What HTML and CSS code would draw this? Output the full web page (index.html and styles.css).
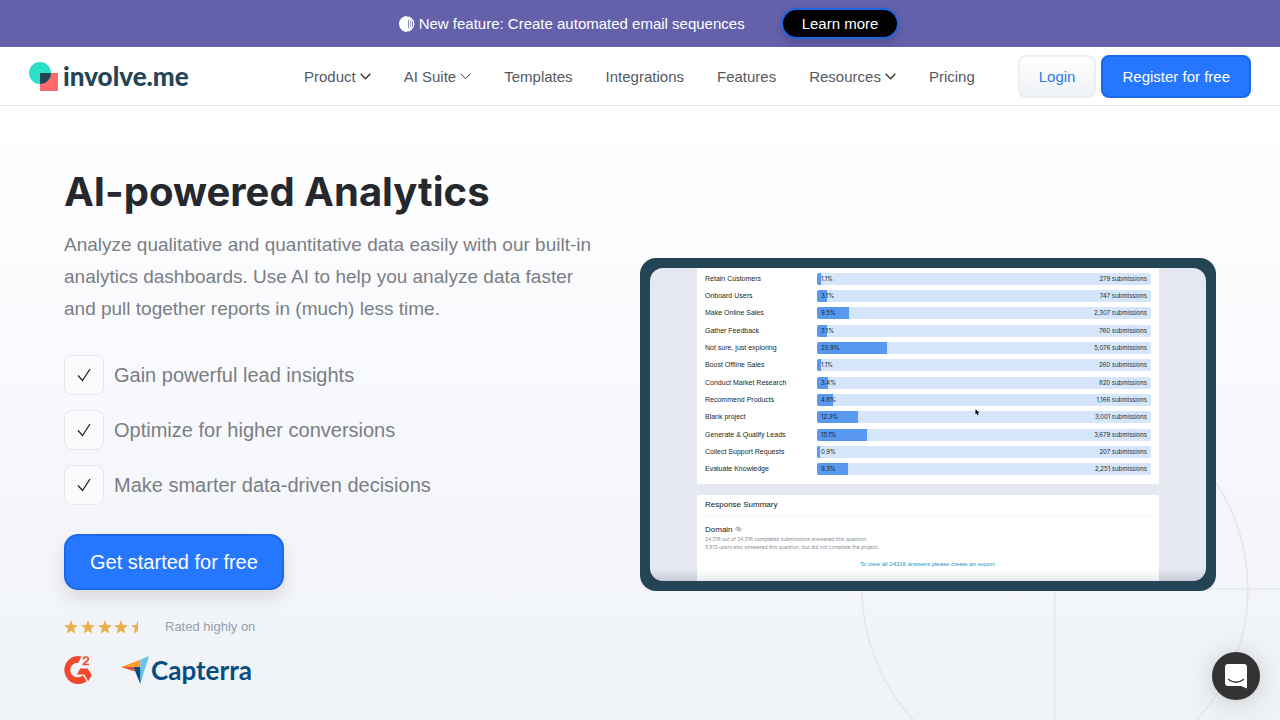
FILE: index.html
```html
<!DOCTYPE html>
<html lang="en">
<head>
<meta charset="utf-8">
<meta name="viewport" content="width=device-width, initial-scale=1">
<title>AI-powered Analytics | involve.me</title>
<link rel="stylesheet" href="styles.css">
</head>
<body>
<aside class="banner">
  <p class="banner-text">
    <svg class="banner-icon" viewBox="0 0 16 16" aria-hidden="true">
      <path d="M8 0A8 8 0 0 0 8 16Z" fill="#fff"/>
      <g fill="none" stroke="#fff" stroke-width="1.3"><path d="M8.600.7V15.300"/><path d="M9 .7Q12.600 8 9 15.300"/><path d="M10 1Q15.400 8 10 15"/><path d="M11.500 1.600Q18.200 8 11.500 14.400"/></g>
    </svg>
    New feature: Create automated email sequences
  </p>
  <a class="banner-link" href="#">Learn more</a>
</aside>

<header class="header">
  <a class="logo" href="#">
    <svg class="logo-mark" viewBox="0 0 29 29" aria-hidden="true">
      <path d="M11 11H29V29H11Z" fill="#ff6b6b"/>
      <circle cx="11" cy="11" r="11" fill="#2be0c8"/>
      <path d="M11 11H22A11 11 0 0 1 11 22Z" fill="#234555"/>
    </svg>
    <span class="logo-name">involve.me</span>
  </a>
  <nav class="nav" aria-label="Main">
    <button class="nav-item" type="button">Product <svg class="chevron" viewBox="0 0 11 7" aria-hidden="true"><path d="M.7.8 5.500 5.700 10.300.8"/></svg></button>
    <button class="nav-item" type="button">AI Suite <svg class="chevron chevron-light" viewBox="0 0 11 7" aria-hidden="true"><path d="M.7.8 5.500 5.700 10.300.8"/></svg></button>
    <a class="nav-item" href="#">Templates</a>
    <a class="nav-item" href="#">Integrations</a>
    <a class="nav-item" href="#">Features</a>
    <button class="nav-item" type="button">Resources <svg class="chevron" viewBox="0 0 11 7" aria-hidden="true"><path d="M.7.8 5.500 5.700 10.300.8"/></svg></button>
    <a class="nav-item" href="#">Pricing</a>
  </nav>
  <div class="account">
    <a class="btn btn-light" href="#">Login</a>
    <a class="btn btn-primary" href="#">Register for free</a>
  </div>
</header>

<main class="hero">
  <svg class="hero-lines" viewBox="0 0 420 420" aria-hidden="true">
    <circle cx="195" cy="195" r="193"/><path d="M195 195V420M195 195H420"/>
  </svg>
  <section class="intro">
    <h1 class="title">AI-powered Analytics</h1>
    <p class="lead">Analyze qualitative and quantitative data easily with our built-in analytics dashboards. Use AI to help you analyze data faster <br>and pull together reports in (much) less time.</p>
    <ul class="benefits">
      <li class="benefit"><span class="tick"><svg viewBox="0 0 14 14" aria-hidden="true"><path d="M1 7.500 5.500 12.500 13 1"/></svg></span>Gain powerful lead insights</li>
      <li class="benefit"><span class="tick"><svg viewBox="0 0 14 14" aria-hidden="true"><path d="M1 7.500 5.500 12.500 13 1"/></svg></span>Optimize for higher conversions</li>
      <li class="benefit"><span class="tick"><svg viewBox="0 0 14 14" aria-hidden="true"><path d="M1 7.500 5.500 12.500 13 1"/></svg></span>Make smarter data-driven decisions</li>
    </ul>
    <a class="btn btn-primary btn-large" href="#">Get started for free</a>
    <div class="rating">
      <svg class="stars" viewBox="0 0 76 14" role="img" aria-label="4.5 out of 5 stars">
        <defs><path id="star" d="M7 0 8.900 4.900 14 5.200 10 8.500 11.400 13.700 7 10.800 2.600 13.700 4 8.500 0 5.200 5.100 4.900Z"/></defs>
        <use href="#star"/><use href="#star" x="17"/><use href="#star" x="34"/><use href="#star" x="50"/>
        <path d="M74 0V10.800L69.600 13.700 71 8.500 67 5.200 72.100 4.900Z"/>
      </svg>
      <span>Rated highly on</span>
    </div>
    <div class="partners">
      <svg class="g2" viewBox="0 0 28 30" role="img" aria-label="G2">
        <path d="M17.500 1.400A14 14 0 1 0 22.800 26.200L18.800 20.200A7.300 7.300 0 1 1 14.500 7.800Z" fill="#ef492d"/>
        <path d="M16.200 13.500H23.600L27.800 20 24.200 26.300 20.300 19.600H13Z" fill="#ef492d"/>
        <path d="M19.200 4.300Q19.600 2 21.900 2 24.300 2 24.300 4.100 24.300 5.500 22.300 6.700 19.900 7.900 19.500 9.500H25" fill="none" stroke="#ef492d" stroke-width="1.700"/>
      </svg>
      <span class="capterra">
        <svg class="capterra-mark" viewBox="0 0 29 29" aria-hidden="true">
          <path d="M0 11 19.300 3.800V11Z" fill="#ff9d28"/>
          <path d="M19.300 3.800 28 0 19.300 28Z" fill="#68c5ed"/>
          <path d="M12.500 11H19.300V28Z" fill="#044d80"/>
          <path d="M0 11H12.500L14.300 15.600Z" fill="#e54747"/>
        </svg>
        Capterra
      </span>
    </div>
  </section>

  <section class="preview" aria-label="Analytics preview">
    <div class="screen">
      <div class="card">
        <table class="stats">
          <tbody>
            <tr><th>Retain Customers</th><td><div class="bar"><i style="width:1.1%"></i><span>1.1%</span><b>279 submissions</b></div></td></tr>
            <tr><th>Onboard Users</th><td><div class="bar"><i style="width:3.1%"></i><span>3.1%</span><b>747 submissions</b></div></td></tr>
            <tr><th>Make Online Sales</th><td><div class="bar"><i style="width:9.5%"></i><span>9.5%</span><b>2,307 submissions</b></div></td></tr>
            <tr><th>Gather Feedback</th><td><div class="bar"><i style="width:3.1%"></i><span>3.1%</span><b>760 submissions</b></div></td></tr>
            <tr><th>Not sure, just exploring</th><td><div class="bar"><i style="width:20.9%"></i><span>20.9%</span><b>5,076 submissions</b></div></td></tr>
            <tr><th>Boost Offline Sales</th><td><div class="bar"><i style="width:1.1%"></i><span>1.1%</span><b>260 submissions</b></div></td></tr>
            <tr><th>Conduct Market Research</th><td><div class="bar"><i style="width:3.4%"></i><span>3.4%</span><b>820 submissions</b></div></td></tr>
            <tr><th>Recommend Products</th><td><div class="bar"><i style="width:4.8%"></i><span>4.8%</span><b>1,166 submissions</b></div></td></tr>
            <tr><th>Blank project</th><td><div class="bar"><i style="width:12.3%"></i><span>12.3%</span><b>3,001 submissions</b></div></td></tr>
            <tr><th>Generate &amp; Qualify Leads</th><td><div class="bar"><i style="width:15.1%"></i><span>15.1%</span><b>3,679 submissions</b></div></td></tr>
            <tr><th>Collect Support Requests</th><td><div class="bar"><i style="width:0.9%"></i><span>0.9%</span><b>207 submissions</b></div></td></tr>
            <tr><th>Evaluate Knowledge</th><td><div class="bar"><i style="width:9.3%"></i><span>9.3%</span><b>2,251 submissions</b></div></td></tr>
          </tbody>
        </table>
      </div>
      <div class="card summary">
        <h2 class="summary-title">Response Summary</h2>
        <h3 class="summary-field">Domain <svg class="eye" viewBox="0 0 7 6" aria-hidden="true"><path d="M.4 3Q3.500-.8 6.600 3 3.500 6.800.4 3ZM1 .5 6 5.500"/><circle cx="3.500" cy="3" r="1"/></svg></h3>
        <p class="summary-note">24,316 out of 24,316 completed submissions answered this question.</p>
        <p class="summary-note">3,513 users also answered this question, but did not complete the project.</p>
        <a class="summary-link" href="#">To view all 24316 answers please create an export.</a>
      </div>
      <svg class="cursor" viewBox="0 0 5 7" aria-hidden="true"><path d="M.5 0V5.200L1.700 4.200 2.500 6.300 3.600 5.800 2.800 3.900H4.300Z"/></svg>
    </div>
  </section>
</main>

<button class="chat" type="button" aria-label="Open chat">
  <svg viewBox="0 0 22 25" aria-hidden="true">
    <path d="M3 0H19Q22 0 22 3V24.500L16 22H3Q0 22 0 19V3Q0 0 3 0Z" fill="#fff"/>
    <path d="M3.500 15.500Q11 21 18.500 15.500" fill="none" stroke="#333" stroke-width="1.300" stroke-linecap="round"/>
  </svg>
</button>
</body>
</html>
```
FILE: styles.css
```css
* { box-sizing: border-box; }

body {
  margin: 0;
  min-height: 100vh;
  display: flex;
  flex-direction: column;
  font-family: "Liberation Sans", Arial, sans-serif;
  font-size: 15px;
  color: #54595f;
}

a { color: inherit; text-decoration: none; }
button { font: inherit; color: inherit; border: 0; background: none; padding: 0; cursor: pointer; }
h1, h2, h3, p, ul { margin: 0; padding: 0; }
ul { list-style: none; }

.banner {
  display: flex;
  justify-content: center;
  align-items: center;
  gap: 36px;
  min-height: 47px;
  padding: 8px 16px 8px 34px;
  background: #6461aa;
  color: #fff;
}
.banner-text { display: flex; align-items: center; gap: 4px; }
.banner-icon { width: 16px; height: 16px; }
.banner-link {
  padding: 5px 19px;
  border: 2px solid #1c66e0;
  border-radius: 16px;
  line-height: 17px;
  background: #000;
  box-shadow: 0 4px 8px rgba(40, 40, 80, .25);
}

.header {
  display: flex;
  align-items: center;
  min-height: 59px;
  padding: 0 29px;
  background: #fff;
  border-bottom: 1px solid #e4e8ec;
}
.logo { display: flex; align-items: center; gap: 5px; color: #234555; }
.logo-mark { width: 29px; height: 29px; }
.logo-name { font: 900 26px/29px Lato, sans-serif; }
.nav { display: flex; gap: 33px; margin-left: auto; margin-right: 43px; }
.nav-item { display: flex; align-items: center; gap: 4px; line-height: 21px; }
.chevron { width: 11px; height: 7px; fill: none; stroke: #333; stroke-width: 1.4; }
.chevron-light { stroke-width: 1; }
.account { display: flex; gap: 5px; }

.btn {
  display: inline-block;
  padding: 11px 19px;
  border: 2px solid;
  border-radius: 8px;
  line-height: 17px;
}
.btn-light { border-color: #eceef0; background: linear-gradient(#fff, #eef1f5); color: #2b7be4; }
.btn-primary { border-color: #1a69ea; background: #2577ff; color: #fff; }
.btn-large {
  padding: 14px 24px;
  border-radius: 14px;
  font-size: 20px;
  line-height: 24px;
  box-shadow: 0 8px 16px rgba(60, 60, 70, .14);
}

.hero {
  position: relative;
  overflow: hidden;
  flex: 1;
  display: grid;
  grid-template-columns: 1fr 1fr;
  align-items: center;
  padding: 58px 64px 35px;
  background: linear-gradient(#fff, #f9fafd 38%, #f3f5f9 76%, #eff3f6);
}
.hero-lines {
  position: absolute;
  right: 0;
  bottom: -94px;
  width: 420px;
  height: 420px;
  fill: none;
  stroke: #e4e6ea;
  stroke-width: 1.5;
}
.intro { position: relative; padding-right: 36px; }
.title { font: 700 40px/56px Inter, sans-serif; color: #25282d; }
.lead { margin-top: 9px; font-size: 19px; line-height: 32px; color: #7b7e83; }
.benefits { display: grid; gap: 15px; margin: 30px 0 29px; }
.benefit { display: flex; align-items: center; gap: 10px; font-size: 20px; color: #7b7e83; }
.tick {
  display: grid;
  place-items: center;
  width: 40px;
  height: 40px;
  border: 1px solid #e3e8ed;
  border-radius: 8px;
  background: #fafbfd;
}
.tick svg { width: 14px; height: 14px; fill: none; stroke: #222; stroke-width: 1.3; }
.rating { display: flex; align-items: center; gap: 25px; margin-top: 29px; font-size: 13px; line-height: 16px; color: #94a0b3; }
.stars { width: 76px; height: 14px; fill: #ebb04c; }
.partners { display: flex; align-items: center; gap: 29px; margin-top: 20px; }
.g2 { width: 28px; height: 30px; }
.capterra { display: flex; align-items: center; gap: 1px; font: 700 26px/30px Lato, sans-serif; color: #044d80; }
.capterra-mark { width: 29px; height: 29px; }

.preview {
  position: relative;
  padding: 10px;
  border-radius: 16px;
  background: #234555;
}
.screen {
  position: relative;
  display: grid;
  grid-template-rows: auto 1fr;
  gap: 11px;
  padding: 0 47px;
  border-radius: 13px;
  overflow: hidden;
  background: linear-gradient(transparent 96%, rgba(90, 95, 110, .2)), #e5e8f1;
}
.card { padding: 2px 8px 6px; background: #fff; border-radius: 0 0 2px 2px; }
.stats { width: 100%; height: 208px; border-collapse: collapse; table-layout: fixed; font-size: 7px; color: #1c1f24; }
.stats th { width: 112px; padding: 0; font-weight: 400; text-align: left; white-space: nowrap; }
.stats td { padding: 0; }
.stats tr { line-height: 12px; }
.bar {
  position: relative;
  display: flex;
  justify-content: space-between;
  padding: 0 4px;
  border-radius: 2px;
  background: #d6e6fa;
  font-family: Inter, sans-serif;
  font-size: 6px;
  overflow: hidden;
}
.bar i { position: absolute; top: 0; bottom: 0; left: 0; min-width: 3px; background: #5898ee; }
.bar span, .bar b { position: relative; font-weight: 400; }
.summary { padding: 0 8px 12px; border-radius: 2px 2px 0 0; background: linear-gradient(#fff 88%, #e6e8ec); }
.summary-title { font-size: 8px; line-height: 20px; font-weight: 400; color: #111; border-bottom: 1px solid #f4f5f7; }
.summary-field { margin-top: 9px; font-size: 8px; line-height: 10px; font-weight: 400; color: #222; }
.eye { width: 7px; height: 6px; fill: none; stroke: #888; stroke-width: .6; }
.summary-note { font-family: Inter, sans-serif; font-size: 5px; line-height: 8px; color: #8c8f94; }
.summary-link { display: block; margin-top: 9px; font-size: 6px; line-height: 9px; text-align: center; color: #2595cc; }
.cursor { position: absolute; left: calc(58% + 3px); top: 45%; width: 5px; height: 7px; }

.chat {
  position: fixed;
  right: 20px;
  bottom: 20px;
  display: grid;
  place-items: center;
  width: 48px;
  height: 48px;
  border-radius: 50%;
  background: #333;
  box-shadow: 0 1px 6px rgba(0, 0, 0, .06), 0 2px 32px rgba(0, 0, 0, .16);
}
.chat svg { width: 22px; height: 25px; }
```
